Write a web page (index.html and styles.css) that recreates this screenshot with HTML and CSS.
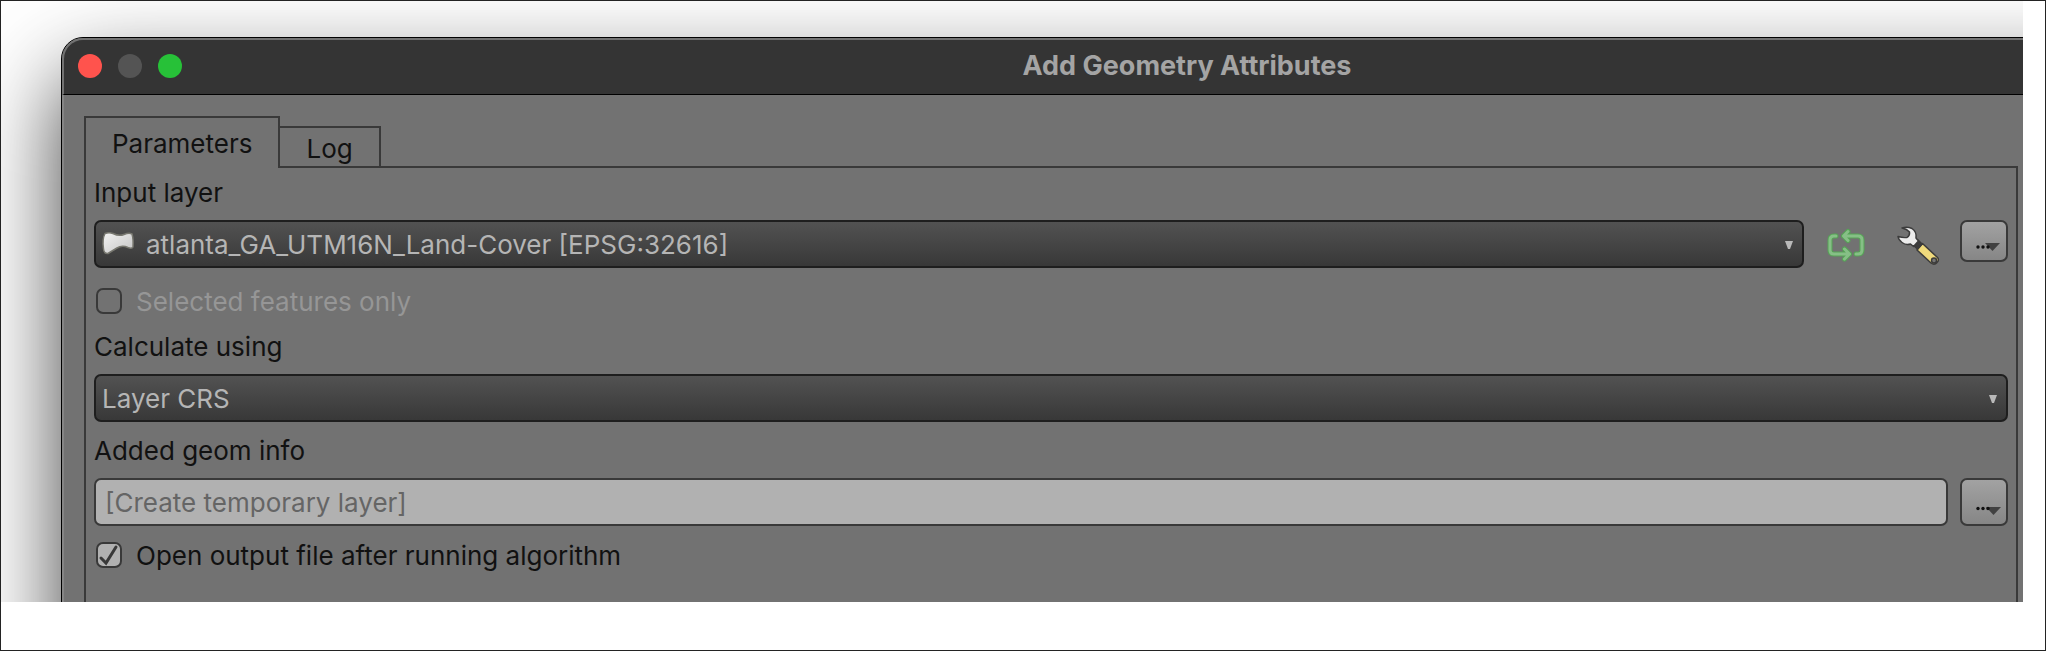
FILE: index.html
```html
<!DOCTYPE html>
<html lang="en">
<head>
<meta charset="utf-8">
<title>Add Geometry Attributes</title>
<link rel="stylesheet" href="styles.css">
</head>
<body>
<main class="frame">
  <section class="window">
    <header class="titlebar">
      <div class="lights">
        <button class="light close" aria-label="Close"></button>
        <button class="light minimize" aria-label="Minimize" disabled></button>
        <button class="light maximize" aria-label="Maximize"></button>
      </div>
      <h1 class="title">Add Geometry Attributes</h1>
    </header>
    <div class="content">
      <div class="tabs" role="tablist">
        <button class="tab active" role="tab" aria-selected="true">Parameters</button>
        <button class="tab" role="tab" aria-selected="false">Log</button>
      </div>
      <form class="pane">
        <label class="label" for="layer">Input layer</label>
        <div class="row layer-row">
          <div class="combo">
            <svg class="polygon" viewBox="0 0 34 24" aria-hidden="true">
              <defs><linearGradient id="pg" x1="0" y1="0" x2="1" y2="1"><stop offset="0" stop-color="#f2f2f2"/><stop offset="1" stop-color="#c4c4c4"/></linearGradient></defs>
              <path d="M4 2.5Q8 1 12 2.5Q18 5.500 23 3.500Q28 1.500 31 3Q32.500 8 32 16Q31 18 27 16.500Q21 14 16 17Q11 20 7 22.500Q3 23 2.500 18Q1 8 4 2.500Z" fill="url(#pg)" stroke="#77776f" stroke-width="1.500"/>
            </svg>
            <select class="select with-icon" id="layer"><option>atlanta_GA_UTM16N_Land-Cover [EPSG:32616]</option></select>
            <svg class="arrow" viewBox="0 0 8 8" aria-hidden="true"><path d="M0 0H8L5 8H3Z" fill="#b9b9b9"/></svg>
          </div>
          <button class="icon-button" type="button" aria-label="Iterate over this layer">
            <svg class="icon" viewBox="0 0 48 48" aria-hidden="true">
              <g fill="none" stroke-linecap="round" stroke-linejoin="round">
                <g stroke="#56a356" stroke-width="5">
                  <path d="M14 16H12Q8 16 8 20V30Q8 34 12 34H26M22.500 29L27.500 34L22.500 39"/>
                  <path d="M34 34H36Q40 34 40 30V20Q40 16 36 16H22M26 11.500L21.500 16L26 20.500"/>
                </g>
                <g stroke="#86bf86" stroke-width="3">
                  <path d="M14 16H12Q8 16 8 20V30Q8 34 12 34H26M22.500 29L27.500 34L22.500 39"/>
                  <path d="M34 34H36Q40 34 40 30V20Q40 16 36 16H22M26 11.500L21.500 16L26 20.500"/>
                </g>
              </g>
            </svg>
          </button>
          <button class="icon-button wrench" type="button" aria-label="Advanced options">
            <svg class="icon" viewBox="0 0 48 48" aria-hidden="true">
              <g stroke="#3c3c3c" stroke-width="1.500" stroke-linejoin="round">
                <path d="M28.500 23.500L23 30L37 43Q40.500 45.500 43 42.500Q45.500 40 43.500 37.500Z" fill="#f0da7c"/>
                <path d="M24 20L20 26L23.500 29L28 24Z" fill="#3c3c3c"/>
                <path d="M8 8Q13 6.500 18 8.500Q23 12 22 18L24.500 21L19.500 26.500L16.500 24Q12 25.500 8 22.500Q4.500 20 4 16.500Q9 18 13 17.500Q16 15.500 15.500 12Q13 9 8 8Z" fill="#ededed"/>
                <circle cx="40" cy="40.500" r="2.500" fill="#777"/>
              </g>
            </svg>
          </button>
          <button class="more short" type="button" aria-label="Browse layer">
            <svg class="more-icon" viewBox="0 0 28 10" aria-hidden="true"><path d="M11 1H26L18.500 9Z" fill="#414141"/><g fill="#111"><circle cx="4" cy="5" r="1.700"/><circle cx="9" cy="5" r="1.700"/><circle cx="14" cy="5" r="1.700"/></g></svg>
          </button>
        </div>
        <div class="check-row disabled">
          <input class="check" type="checkbox" id="selected" disabled>
          <label for="selected">Selected features only</label>
        </div>
        <label class="label" for="crs">Calculate using</label>
        <div class="combo">
          <select class="select" id="crs"><option>Layer CRS</option></select>
          <svg class="arrow" viewBox="0 0 8 8" aria-hidden="true"><path d="M0 0H8L5 8H3Z" fill="#b9b9b9"/></svg>
        </div>
        <label class="label after-combo" for="output">Added geom info</label>
        <div class="row output-row">
          <input class="text" type="text" id="output" placeholder="[Create temporary layer]">
          <button class="more" type="button" aria-label="Browse output">
            <svg class="more-icon" viewBox="0 0 28 10" aria-hidden="true"><path d="M12 1H27L19.500 9Z" fill="#414141"/><g fill="#111"><circle cx="4" cy="2.500" r="1.700"/><circle cx="9" cy="2.500" r="1.700"/><circle cx="14" cy="2.500" r="1.700"/></g></svg>
          </button>
        </div>
        <div class="check-row open-row">
          <input class="check" type="checkbox" id="open" checked>
          <label for="open">Open output file after running algorithm</label>
        </div>
      </form>
    </div>
  </section>
</main>
</body>
</html>
```
FILE: styles.css
```css
* {
  box-sizing: border-box;
}

body {
  margin: 0;
  min-height: 100vh;
  padding: 0 22px 48px 0;
  border: 1px solid #232323;
  background: #fff;
  color: #111;
  font: 26px/34px Inter, "Liberation Sans", sans-serif;
}

button,
input,
select {
  margin: 0;
  padding: 0;
  font: inherit;
  color: inherit;
}

.frame {
  overflow: hidden;
  padding: 36px 0 0 60px;
}

/* The window runs past the right and bottom edges of the frame. */
.window {
  margin: 0 -288px -100px 0;
  border: 1px solid #000;
  border-radius: 22px;
  background: #727272;
  box-shadow: 0 40px 90px rgba(0, 0, 0, 0.75);
}

.titlebar {
  display: grid;
  grid-template-columns: 1fr auto 1fr;
  align-items: center;
  height: 57px;
  padding: 0 14px 2px;
  border: 2px solid #727272;
  border-width: 2px 0 1px 2px;
  border-bottom-color: #000;
  border-radius: 21px 21px 0 0;
  background: #343434;
}

.lights {
  display: flex;
  gap: 16px;
}

.light {
  width: 24px;
  height: 24px;
  border: 0;
  border-radius: 50%;
}

.close { background: #ff534d; }
.minimize { background: #545454; }
.maximize { background: #27c138; }

.title {
  margin: 0;
  font-size: 27px;
  font-weight: 700;
  color: #a4a4a4;
}

.content {
  padding: 21px 292px 0 20px;
  border-left: 2px solid #858585;
}

.tabs {
  display: flex;
  align-items: flex-end;
}

.tab {
  height: 40px;
  padding: 4px 26px 0;
  border: 2px solid #393939;
  border-width: 2px 2px 0 0;
  background: #727272;
}

.tab.active {
  position: relative;
  height: 52px;
  margin-bottom: -2px;
  padding-top: 2px;
  border-left-width: 2px;
}

.pane {
  padding: 8px 8px 131px;
  border: 2px solid #393939;
}

.label {
  display: block;
  width: fit-content;
  margin-bottom: 10px;
}

.row {
  display: flex;
  align-items: flex-start;
}

.combo {
  position: relative;
  flex: 1;
}

.select {
  display: block;
  appearance: none;
  width: 100%;
  height: 48px;
  padding: 2px 40px 0 6px;
  border: 2px solid #1e1e1e;
  border-radius: 7px;
  background: linear-gradient(#525252, #383838);
  color: #b5b5b5;
}

.with-icon {
  padding-left: 50px;
}

.polygon {
  position: absolute;
  left: 7px;
  top: 11px;
  width: 34px;
  height: 24px;
}

.arrow {
  position: absolute;
  right: 11px;
  top: 21px;
  width: 8px;
  height: 8px;
}

.icon-button {
  display: flex;
  width: 48px;
  height: 48px;
  margin-left: 18px;
  border: 0;
  background: none;
}

.wrench {
  margin: 0 18px 0 24px;
}

.icon {
  width: 48px;
  height: 48px;
}

.more {
  display: flex;
  align-items: flex-end;
  justify-content: center;
  width: 48px;
  height: 48px;
  padding: 0 0 8px 8px;
  border: 2px solid #393939;
  border-radius: 7px;
  background: linear-gradient(#a2a2a2, #868686);
}

.short {
  height: 42px;
}

.more-icon {
  width: 28px;
  height: 10px;
}

.check-row {
  display: flex;
  align-items: center;
  gap: 14px;
  height: 26px;
  margin: 20px 0 16px;
  padding-left: 2px;
}

.check-row label {
  padding-top: 2px;
}

.disabled {
  color: #969696;
}

.open-row {
  margin: 16px 0 0;
}

.check {
  appearance: none;
  width: 26px;
  height: 26px;
  border: 2px solid #393939;
  border-radius: 7px;
}

.check:checked {
  background: #b1b1b1 url("data:image/svg+xml,%3Csvg xmlns='http://www.w3.org/2000/svg' viewBox='0 0 22 22'%3E%3Cpath d='M3 14L8 19L18 3' fill='none' stroke='%23393939' stroke-width='3' stroke-linecap='round'/%3E%3C/svg%3E") center / 22px no-repeat;
}

.after-combo {
  margin-top: 12px;
}

.output-row {
  gap: 12px;
}

.text {
  flex: 1;
  min-width: 0;
  height: 48px;
  padding: 0 9px;
  border: 2px solid #393939;
  border-radius: 7px;
  background: #b1b1b1;
}

.text::placeholder {
  color: #656565;
  opacity: 1;
}
```
